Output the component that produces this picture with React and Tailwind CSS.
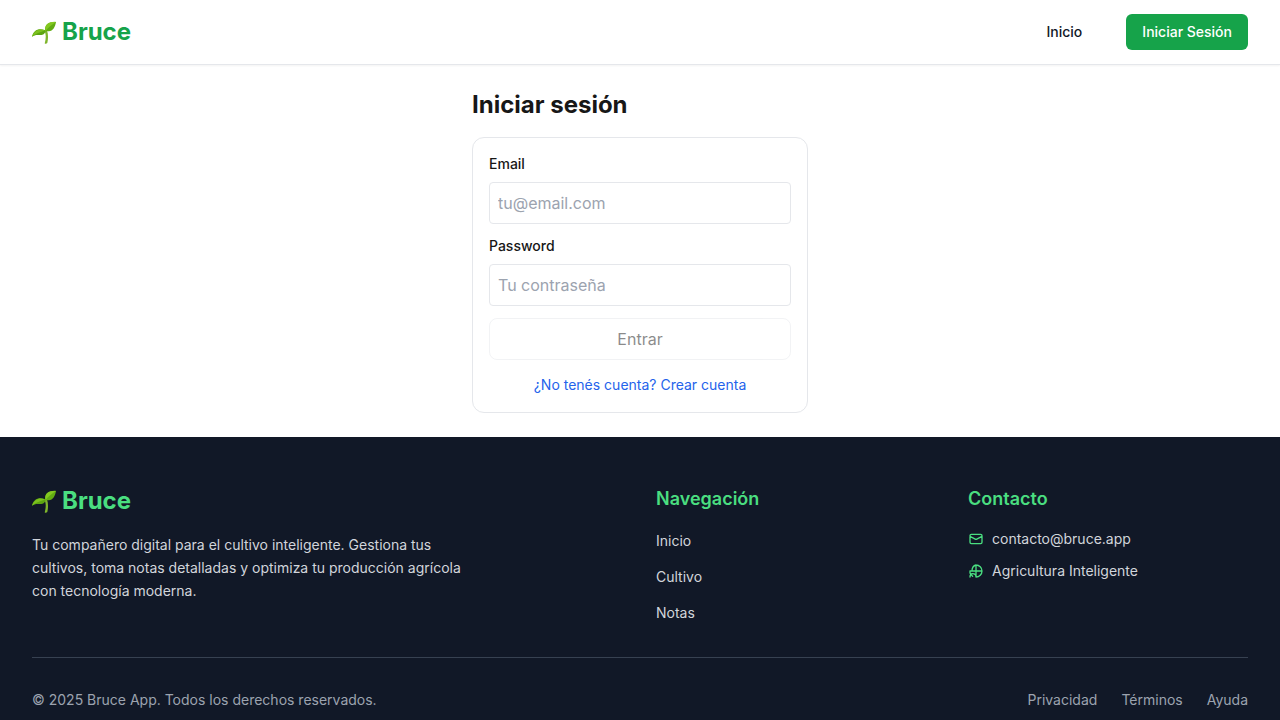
import React from "react";

function Sprout() {
  return (
    <svg className="size-6 shrink-0" viewBox="0 0 24 24" aria-hidden="true">
      <path d="M13 10.500h2C16.300 14 16.300 19 15.300 23q-1.200 1.200-2.600.4C14.200 18 14 14 12.400 10.500Z" fill="#7fb52c" />
      <path d="M0 16.700C1.500 10.500 6 7.800 13.600 10.300c-.3 4.200-3.300 5.200-6.600 4.700C4.200 14.600 2.300 15.300 0 16.700Z" fill="#5ca510" />
      <path d="M0 16.700C3.500 14 7 12.500 13 10.500 7.500 8 2.500 10.500 0 16.700Z" fill="#7cc11e" />
      <path d="M13.400 11.600C11.800 4.500 17 1.700 24 1.900c-.8 5-3 9-7.200 9.300-1.300.1-2.400 0-3.400.4Z" fill="#62ac12" />
      <path d="M13.600 11C15.500 8 19.500 5 24 1.900 17 1.400 12 4.500 13.600 11Z" fill="#83c820" />
    </svg>
  );
}

function Brand({ className }) {
  return (
    <a href="#inicio" className={`flex items-center gap-1.5 text-2xl font-bold ${className}`}>
      <Sprout />
      Bruce
    </a>
  );
}

function Header() {
  return (
    <header className="border-b border-[#e5e7eb] bg-white shadow-[0_1px_2px_rgba(0,0,0,0.05)]">
      <div className="flex h-16 items-center justify-between px-8">
        <Brand className="text-[#16a34a]" />
        <nav className="flex items-center gap-8">
          <a href="#inicio" className="px-3 py-2 text-sm font-medium text-[#111827]">Inicio</a>
          <a href="#login" className="rounded-md bg-[#16a34a] px-4 py-2 text-sm font-medium text-white">Iniciar Sesión</a>
        </nav>
      </div>
    </header>
  );
}

function Field({ id, label, type, placeholder }) {
  return (
    <div>
      <label htmlFor={id} className="mb-2 block text-sm font-medium">{label}</label>
      <input id={id} type={type} placeholder={placeholder} className="block w-full rounded-sm border border-[#e5e7eb] p-2 text-base placeholder:text-[#9ca3af]" />
    </div>
  );
}

function Login() {
  return (
    <main className="mx-auto w-full max-w-96 p-6">
      <h1 className="mb-4 text-2xl font-bold">Iniciar sesión</h1>
      <form className="space-y-3 rounded-xl border border-[#e5e7eb] p-4">
        <Field id="email" label="Email" type="email" placeholder="tu@email.com" />
        <Field id="password" label="Password" type="password" placeholder="Tu contraseña" />
        <button type="submit" disabled className="w-full rounded-lg border border-[#e5e7eb] p-2 opacity-50">Entrar</button>
        <p className="text-center">
          <a href="#registro" className="text-sm text-[#2563eb]">¿No tenés cuenta? Crear cuenta</a>
        </p>
      </form>
    </main>
  );
}

function MailIcon() {
  return (
    <svg className="size-4 text-[#4ade80]" fill="none" stroke="currentColor" viewBox="0 0 24 24" aria-hidden="true">
      <path strokeLinecap="round" strokeLinejoin="round" strokeWidth="2" d="M3 8l7.89 4.26a2 2 0 002.22 0L21 8M5 19h14a2 2 0 002-2V7a2 2 0 00-2-2H5a2 2 0 00-2 2v10a2 2 0 002 2z" />
    </svg>
  );
}

function FieldIcon() {
  return (
    <svg className="size-4 text-[#4ade80]" fill="none" stroke="currentColor" viewBox="0 0 24 24" aria-hidden="true">
      <path strokeLinecap="round" strokeLinejoin="round" strokeWidth="2" d="M21 12a9 9 0 01-9 9m9-9a9 9 0 00-9-9m9 9H3m9 9V3m0 0C8 4 6 7 6 12M3 12v3m0 6c0-3 1-5 4-5s5 2 5 5M3 15l4 5" />
    </svg>
  );
}

function Footer() {
  return (
    <footer className="bg-[#111827] px-8 pt-12 pb-8 text-sm text-[#d1d5db]">
      <div className="grid grid-cols-4 gap-8">
        <div className="col-span-2">
          <Brand className="text-[#4ade80]" />
          <p className="mt-4 max-w-md leading-[23px]">
            Tu compañero digital para el cultivo inteligente. Gestiona tus cultivos, toma notas detalladas y optimiza tu producción agrícola con tecnología moderna.
          </p>
        </div>
        <nav>
          <h2 className="mb-4 text-lg font-semibold text-[#4ade80]">Navegación</h2>
          <ul className="space-y-3">
            <li className="py-0.5"><a href="#inicio">Inicio</a></li>
            <li className="py-0.5"><a href="#cultivo">Cultivo</a></li>
            <li className="py-0.5"><a href="#notas">Notas</a></li>
          </ul>
        </nav>
        <div>
          <h2 className="mb-4 text-lg font-semibold text-[#4ade80]">Contacto</h2>
          <ul className="space-y-3">
            <li className="flex items-center gap-2"><MailIcon />contacto@bruce.app</li>
            <li className="flex items-center gap-2"><FieldIcon />Agricultura Inteligente</li>
          </ul>
        </div>
      </div>
      <div className="mt-8 flex items-center justify-between border-t border-[#374151] pt-8 text-[#9ca3af]">
        <p>© 2025 Bruce App. Todos los derechos reservados.</p>
        <nav className="flex gap-6">
          <a href="#privacidad">Privacidad</a>
          <a href="#terminos">Términos</a>
          <a href="#ayuda">Ayuda</a>
        </nav>
      </div>
    </footer>
  );
}

export default function App() {
  return (
    <div className="min-h-screen bg-white font-['Inter',sans-serif] text-[#171717] antialiased">
      <Header />
      <Login />
      <Footer />
    </div>
  );
}
